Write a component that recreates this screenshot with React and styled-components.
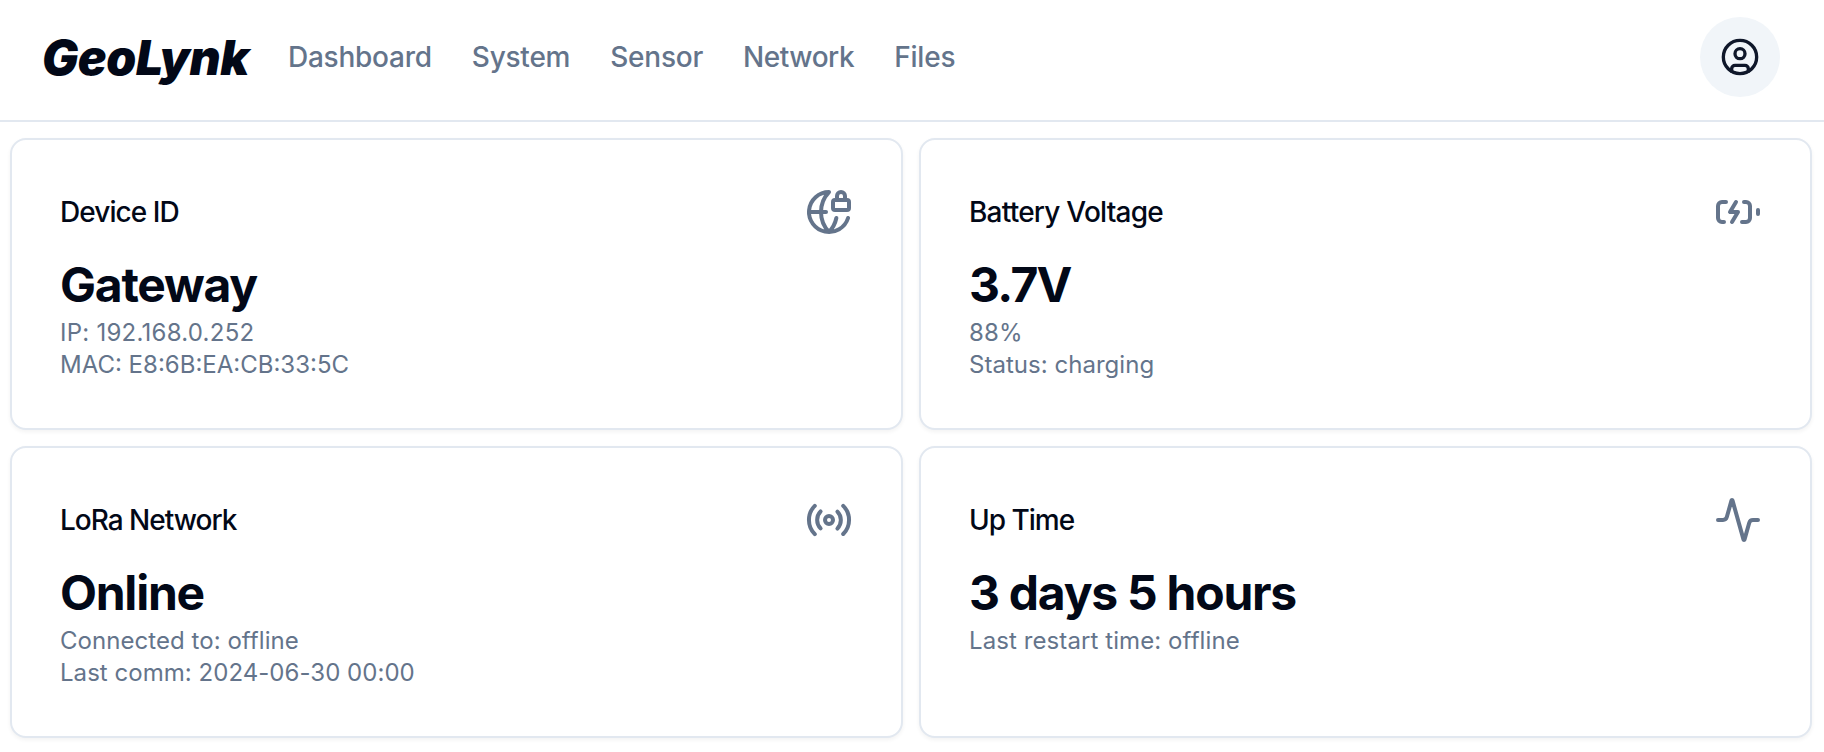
import React from "react";
import styled, { createGlobalStyle } from "styled-components";

const GlobalStyle = createGlobalStyle`
  *, *::before, *::after { box-sizing: border-box; }
  body {
    margin: 0;
    background: #ffffff;
    color: #020817;
    font-family: Inter, "Liberation Sans", sans-serif;
  }
  h3, p { margin: 0; }
`;

const Header = styled.header`
  display: flex;
  align-items: center;
  height: 122px;
  padding: 0 44px 6px 42px;
  border-bottom: 2px solid #e2e8f0;
`;

const Logo = styled.a`
  margin: 1px 38px 0 0;
  width: 208px;
  white-space: nowrap;
  font-size: 48px;
  line-height: 64px;
  font-weight: 900;
  font-style: italic;
  letter-spacing: -0.4px;
`;

const Nav = styled.nav`
  display: flex;
  gap: 40px;
  flex: 1;
`;

const NavLink = styled.a`
  color: #64748b;
  font-size: 28px;
  line-height: 40px;
  font-weight: 500;
  letter-spacing: ${(p) => p.$tracking}px;
`;

const AvatarButton = styled.button`
  display: flex;
  align-items: center;
  justify-content: center;
  width: 80px;
  height: 80px;
  padding: 0;
  border: 0;
  border-radius: 50%;
  background: #f1f5f9;
  color: #0f172a;
`;

const Grid = styled.main`
  display: grid;
  grid-template-columns: 1fr 1fr;
  gap: 16px;
  padding: 16px 12px 14px 10px;
`;

const Card = styled.section`
  height: 292px;
  padding: 48px;
  border: 2px solid #e2e8f0;
  border-radius: 16px;
  background: #ffffff;
  box-shadow: 0 2px 4px rgba(0, 0, 0, 0.05);
`;

const CardHeader = styled.div`
  display: flex;
  align-items: center;
  justify-content: space-between;
  padding-bottom: 16.5px;
  color: #64748b;
`;

const CardTitle = styled.h3`
  color: #020817;
  font-size: 28px;
  line-height: 40px;
  font-weight: 500;
  letter-spacing: ${(p) => p.$tracking}px;
`;

const Value = styled.div`
  font-size: 48px;
  line-height: 64px;
  font-weight: 700;
  letter-spacing: ${(p) => p.$tracking}px;
`;

const Detail = styled.p`
  color: #64748b;
  font-size: 24px;
  line-height: 32px;
  letter-spacing: ${(p) => p.$tracking}px;
`;

const Svg = styled.svg`
  display: block;
  flex: none;
  width: ${(p) => p.$size}px;
  height: ${(p) => p.$size}px;
  fill: none;
  stroke: currentColor;
  stroke-width: 2;
  stroke-linecap: round;
  stroke-linejoin: round;
`;

const Icon = ({ size = 48, children }) => (
  <Svg $size={size} viewBox="0 0 24 24" aria-hidden="true">
    {children}
  </Svg>
);

const CircleUser = () => (
  <Icon size={40}>
    <circle cx="12" cy="12" r="10" />
    <circle cx="12" cy="10" r="3" />
    <path d="M7 20.662V19a2 2 0 0 1 2-2h6a2 2 0 0 1 2 2v1.662" />
  </Icon>
);

const GlobeLock = () => (
  <Icon>
    <path d="M15.686 15A14.5 14.5 0 0 1 12 22a14.5 14.5 0 0 1 0-20 10 10 0 1 0 9.542 13" />
    <path d="M2 12h8.5" />
    <path d="M20 6V4a2 2 0 1 0-4 0v2" />
    <rect width="8" height="5" x="14" y="6" rx="1" />
  </Icon>
);

const BatteryCharging = () => (
  <Icon>
    <path d="M15 7h1a2 2 0 0 1 2 2v6a2 2 0 0 1-2 2h-2" />
    <path d="M6 7H4a2 2 0 0 0-2 2v6a2 2 0 0 0 2 2h1" />
    <path d="m11 7-3 5h4l-3 5" />
    <path d="M22 11v2" />
  </Icon>
);

const Radio = () => (
  <Icon>
    <path d="M4.9 19.1C1 15.2 1 8.8 4.9 4.9" />
    <path d="M7.8 16.2c-2.3-2.3-2.3-6.1 0-8.5" />
    <circle cx="12" cy="12" r="2" />
    <path d="M16.2 7.8c2.3 2.3 2.3 6.1 0 8.5" />
    <path d="M19.1 4.9C23 8.8 23 15.1 19.1 19" />
  </Icon>
);

const Activity = () => (
  <Icon>
    <path d="M22 12h-2.48a2 2 0 0 0-1.93 1.46l-2.35 8.36a.25.25 0 0 1-.48 0L9.24 2.18a.25.25 0 0 0-.48 0l-2.35 8.36A2 2 0 0 1 4.49 12H2" />
  </Icon>
);

const links = [
  { label: "Dashboard", tracking: -0.25 },
  { label: "System", tracking: -0.23 },
  { label: "Sensor", tracking: -0.23 },
  { label: "Network", tracking: -0.45 },
  { label: "Files", tracking: -0.2 },
];

const cards = [
  {
    title: "Device ID",
    titleTracking: -0.94,
    icon: GlobeLock,
    value: "Gateway",
    valueTracking: -1.25,
    details: [
      { text: "IP: 192.168.0.252", tracking: 0.25 },
      { text: "MAC: E8:6B:EA:CB:33:5C", tracking: 0 },
    ],
  },
  {
    title: "Battery Voltage",
    titleTracking: -0.78,
    icon: BatteryCharging,
    value: "3.7V",
    valueTracking: -1.7,
    details: [
      { text: "88%", tracking: 0.2 },
      { text: "Status: charging", tracking: 0.03 },
    ],
  },
  {
    title: "LoRa Network",
    titleTracking: -1,
    icon: Radio,
    value: "Online",
    valueTracking: -1.25,
    details: [
      { text: "Connected to: offline", tracking: 0.05 },
      { text: "Last comm: 2024-06-30 00:00", tracking: 0.04 },
    ],
  },
  {
    title: "Up Time",
    titleTracking: -1,
    icon: Activity,
    value: "3 days 5 hours",
    valueTracking: -1.25,
    details: [{ text: "Last restart time: offline", tracking: 0.09 }],
  },
];

export default function App() {
  return (
    <>
      <GlobalStyle />
      <Header>
        <Logo>GeoLynk</Logo>
        <Nav>
          {links.map((l) => (
            <NavLink key={l.label} $tracking={l.tracking}>
              {l.label}
            </NavLink>
          ))}
        </Nav>
        <AvatarButton aria-label="Account">
          <CircleUser />
        </AvatarButton>
      </Header>
      <Grid>
        {cards.map((c) => (
          <Card key={c.title}>
            <CardHeader>
              <CardTitle $tracking={c.titleTracking}>{c.title}</CardTitle>
              <c.icon />
            </CardHeader>
            <Value $tracking={c.valueTracking}>{c.value}</Value>
            {c.details.map((d) => (
              <Detail key={d.text} $tracking={d.tracking}>
                {d.text}
              </Detail>
            ))}
          </Card>
        ))}
      </Grid>
    </>
  );
}
